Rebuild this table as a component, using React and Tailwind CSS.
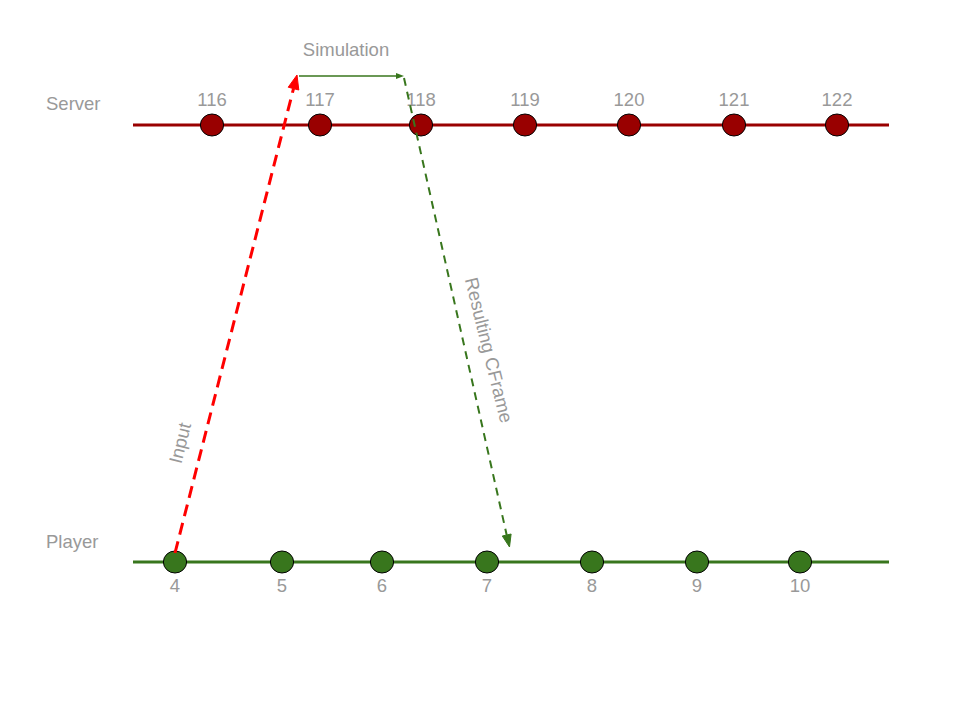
import React from "react";

const serverTicks = [
  { x: 212, label: "116" },
  { x: 320, label: "117" },
  { x: 421, label: "118" },
  { x: 525, label: "119" },
  { x: 629, label: "120" },
  { x: 734, label: "121" },
  { x: 837, label: "122" },
];

const playerTicks = [
  { x: 175, label: "4" },
  { x: 282, label: "5" },
  { x: 382, label: "6" },
  { x: 487, label: "7" },
  { x: 592, label: "8" },
  { x: 697, label: "9" },
  { x: 800, label: "10" },
];

const textProps = {
  fill: "#999999",
  fontSize: 18.5,
  fontFamily: "'Liberation Sans', Arial, sans-serif",
};

function Timeline({ y, color, ticks, labelY }) {
  return (
    <g>
      <line x1={133} y1={y} x2={889} y2={y} stroke={color} strokeWidth={3} />
      {ticks.map((t) => (
        <g key={t.label}>
          <ellipse cx={t.x} cy={y} rx={11.6} ry={11} fill={color} stroke="#000" strokeWidth={1} />
          <text x={t.x} y={labelY} textAnchor="middle" {...textProps}>
            {t.label}
          </text>
        </g>
      ))}
    </g>
  );
}

export default function App() {
  return (
    <div className="w-[973px] h-[726px] bg-white overflow-hidden">
      <svg width="973" height="726" viewBox="0 0 973 726" className="block">
        <text x={46} y={110} {...textProps}>Server</text>
        <text x={46} y={548} {...textProps}>Player</text>
        <text x={346} y={56} textAnchor="middle" {...textProps}>Simulation</text>

        <Timeline y={125} color="#990000" ticks={serverTicks} labelY={106} />
        <Timeline y={562} color="#38761d" ticks={playerTicks} labelY={592} />

        {/* input arrow */}
        <line x1={175} y1={553} x2={293.5} y2={88.6} stroke="#ff0000" strokeWidth={3} strokeDasharray="12 7" />
        <polygon points="297,75 298.8,90 288.2,87.2" fill="#ff0000" stroke="#ff0000" strokeWidth={1} />
        <text
          transform="translate(180 443) rotate(-76)"
          textAnchor="middle"
          dominantBaseline="central"
          {...textProps}
        >
          Input
        </text>

        {/* simulation */}
        <line x1={299} y1={76} x2={397} y2={76} stroke="#38761d" strokeWidth={1.3} />
        <polygon points="404,76 396,73 396,79" fill="#38761d" />

        {/* resulting cframe */}
        <line x1={404} y1={78} x2={506.7} y2={535} stroke="#38761d" strokeWidth={2} strokeDasharray="8 6" />
        <polygon points="509.5,547 511.1,534 502.3,536" fill="#38761d" stroke="#38761d" strokeWidth={1} />
        <text
          transform="translate(489 350) rotate(76)"
          textAnchor="middle"
          dominantBaseline="central"
          {...textProps}
        >
          Resulting CFrame
        </text>
      </svg>
    </div>
  );
}
